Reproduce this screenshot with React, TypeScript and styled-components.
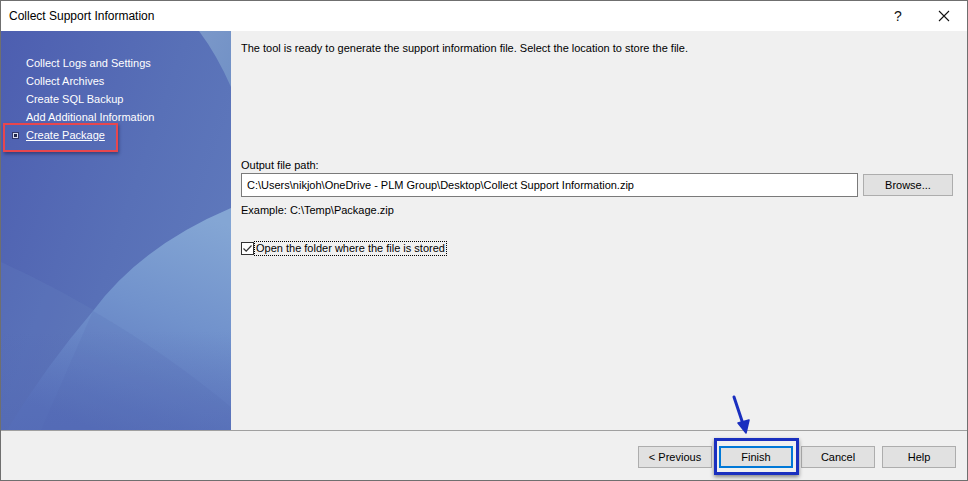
import React from "react";
import styled, { createGlobalStyle } from "styled-components";

const Global = createGlobalStyle`
  html, body { margin: 0; padding: 0; background: #ffffff; }
  body { font-family: "Liberation Sans", Arial, sans-serif; font-size: 12px; color: #000; }
  * { box-sizing: border-box; }
`;

const Window = styled.div`
  position: relative;
  width: 968px;
  height: 481px;
  border: 1px solid #6f6f6f;
  background: #f0f0f0;
  display: flex;
  flex-direction: column;
  overflow: hidden;
`;

const TitleBar = styled.div`
  height: 30px;
  background: #ffffff;
  display: flex;
  align-items: center;
  padding-left: 8px;
  flex-shrink: 0;
`;

const Title = styled.div`
  flex: 1;
  font-size: 12px;
  color: #000;
`;

const TitleButton = styled.div`
  width: 46px;
  height: 30px;
  display: flex;
  align-items: center;
  justify-content: center;
  font-size: 14px;
  color: #111;
`;

const Body = styled.div`
  display: flex;
  height: 399px;
  flex-shrink: 0;
`;

const Sidebar = styled.div`
  position: relative;
  width: 230px;
  flex-shrink: 0;
  background: #5064b3;
  overflow: hidden;
`;

const SidebarArt = styled.svg`
  position: absolute;
  left: 0;
  top: 0;
  width: 230px;
  height: 399px;
`;

const NavList = styled.ul`
  position: relative;
  list-style: none;
  margin: 0;
  padding: 23px 0 0 25px;
`;

const NavItem = styled.li<{ $active?: boolean }>`
  position: relative;
  height: 18px;
  line-height: 18px;
  color: #ffffff;
  font-size: 11px;
  white-space: nowrap;
  text-decoration: ${(p) => (p.$active ? "underline" : "none")};
  &::after {
    content: "";
    display: ${(p) => (p.$active ? "block" : "none")};
    position: absolute;
    left: -23px;
    top: -3px;
    width: 111px;
    height: 25px;
    border: 2px solid #e8464d;
    box-shadow: 1px 2px 3px rgba(20, 20, 60, 0.45);
  }
`;

const Bullet = styled.span`
  position: absolute;
  left: -14px;
  top: 6px;
  width: 7px;
  height: 7px;
  background: #d9def0;
  border: 1px solid #33386a;
  &::after {
    content: "";
    position: absolute;
    left: 1px;
    top: 1px;
    width: 3px;
    height: 3px;
    background: #20244a;
  }
`;

const Main = styled.div`
  flex: 1;
  display: flex;
  flex-direction: column;
  padding: 10px 15px 0 10px;
`;

const Intro = styled.p`
  margin: 0;
  font-size: 11px;
  line-height: 14px;
`;

const Label = styled.div`
  margin-top: 103px;
  font-size: 11px;
  line-height: 14px;
`;

const PathRow = styled.div`
  display: flex;
  align-items: center;
  gap: 5px;
  margin-top: 1px;
`;

const PathInput = styled.div`
  width: 617px;
  height: 24px;
  background: #ffffff;
  border: 1px solid #7a7a7a;
  padding-left: 5px;
  font-size: 11px;
  line-height: 22px;
  white-space: nowrap;
`;

const Button = styled.div<{ $default?: boolean }>`
  width: 74px;
  height: 22px;
  background: #e1e1e1;
  border: 1px solid ${(p) => (p.$default ? "#0078d7" : "#adadad")};
  box-shadow: ${(p) => (p.$default ? "inset 0 0 0 1px #0078d7" : "none")};
  display: flex;
  align-items: center;
  justify-content: center;
  font-size: 11px;
  color: #000;
`;

const BrowseButton = styled(Button)`
  width: 90px;
`;

const Example = styled.div`
  margin-top: 6px;
  font-size: 11px;
  line-height: 14px;
`;

const CheckRow = styled.div`
  display: flex;
  align-items: center;
  margin-top: 25px;
`;

const CheckBox = styled.span`
  width: 13px;
  height: 13px;
  border: 1px solid #333333;
  background: #ffffff;
  display: flex;
  align-items: center;
  justify-content: center;
  margin-right: 1px;
`;

const CheckLabel = styled.span`
  font-size: 11px;
  line-height: 13px;
  outline: 1px dotted #000;
  outline-offset: 0;
  padding: 0 1px;
`;

const Footer = styled.div`
  flex: 1;
  border-top: 1px solid #a0a0a0;
  display: flex;
  justify-content: flex-end;
  align-items: flex-start;
  gap: 7px;
  padding: 15px 11px 0 0;
`;

const FinishWrap = styled.div`
  position: relative;
  margin: 0 1px 0 0;
  &::before {
    content: "";
    position: absolute;
    left: -5px;
    top: -8px;
    right: -6px;
    bottom: -7px;
    border: 3px solid #1a2fbf;
    box-shadow: 0 2px 4px rgba(0, 0, 0, 0.45);
  }
`;

const Arrow = styled.svg`
  position: absolute;
  left: 725px;
  top: 392px;
  width: 30px;
  height: 44px;
`;

export default function App() {
  return (
    <>
      <Global />
      <Window>
        <TitleBar>
          <Title>Collect Support Information</Title>
          <TitleButton>?</TitleButton>
          <TitleButton>
            <svg width="12" height="12" viewBox="0 0 12 12">
              <path d="M1 1 L11 11 M11 1 L1 11" stroke="#111" strokeWidth="1.1" />
            </svg>
          </TitleButton>
        </TitleBar>
        <Body>
          <Sidebar>
            <SidebarArt viewBox="0 0 230 399" preserveAspectRatio="none">
              <defs>
                <linearGradient id="base" x1="0" y1="0" x2="1" y2="0.6">
                  <stop offset="0" stopColor="#4d5eb0" />
                  <stop offset="0.6" stopColor="#5870b7" />
                  <stop offset="1" stopColor="#5f79bc" />
                </linearGradient>
                <linearGradient id="lightA" x1="0.8" y1="0" x2="0.4" y2="1">
                  <stop offset="0" stopColor="#84a6d4" />
                  <stop offset="0.45" stopColor="#7192cc" />
                  <stop offset="1" stopColor="#5a73bc" />
                </linearGradient>
                <linearGradient id="lightTop" x1="0" y1="0" x2="1" y2="1">
                  <stop offset="0" stopColor="#7b98c9" />
                  <stop offset="1" stopColor="#7191c6" />
                </linearGradient>
                <linearGradient id="bottomFade" x1="0" y1="0" x2="0" y2="1">
                  <stop offset="0" stopColor="#4e63b0" stopOpacity="0" />
                  <stop offset="1" stopColor="#4e63b0" stopOpacity="0.4" />
                </linearGradient>
              </defs>
              <rect x="0" y="0" width="230" height="399" fill="url(#base)" />
              <path d="M198 0 Q216 24 230 56 L230 0 Z" fill="url(#lightTop)" />
              <path d="M0 231 Q120 285 230 376 L230 399 L0 399 Z" fill="#7a9ad0" opacity="0.12" />
              <path d="M230 177 Q140 215 92 280 Q45 335 6 399 L230 399 Z" fill="url(#lightA)" />
              <path d="M92 280 Q165 322 230 376 L230 399 L40 399 Z" fill="#4e63b0" opacity="0.15" />
              <rect x="0" y="300" width="230" height="99" fill="url(#bottomFade)" />
            </SidebarArt>
            <NavList>
              <NavItem>Collect Logs and Settings</NavItem>
              <NavItem>Collect Archives</NavItem>
              <NavItem>Create SQL Backup</NavItem>
              <NavItem>Add Additional Information</NavItem>
              <NavItem $active>
                <Bullet />
                Create Package
              </NavItem>
            </NavList>
          </Sidebar>
          <Main>
            <Intro>
              The tool is ready to generate the support information file. Select the location to store the file.
            </Intro>
            <Label>Output file path:</Label>
            <PathRow>
              <PathInput>C:\Users\nikjoh\OneDrive - PLM Group\Desktop\Collect Support Information.zip</PathInput>
              <BrowseButton>Browse...</BrowseButton>
            </PathRow>
            <Example>Example: C:\Temp\Package.zip</Example>
            <CheckRow>
              <CheckBox>
                <svg width="11" height="11" viewBox="0 0 11 11">
                  <path d="M1.5 5.5 L4.2 8.2 L9.5 2.5" fill="none" stroke="#333" strokeWidth="1.2" />
                </svg>
              </CheckBox>
              <CheckLabel>Open the folder where the file is stored</CheckLabel>
            </CheckRow>
          </Main>
        </Body>
        <Footer>
          <Button>&lt; Previous</Button>
          <FinishWrap>
            <Button $default>Finish</Button>
          </FinishWrap>
          <Button>Cancel</Button>
          <Button>Help</Button>
        </Footer>
        <Arrow viewBox="0 0 30 44">
          <path d="M8 4 L18 34" stroke="#1a2fbf" strokeWidth="3" strokeLinecap="round" />
          <path d="M12 30 L20 40 L23 27 Z" fill="#1a2fbf" stroke="#1a2fbf" strokeWidth="1.5" strokeLinejoin="round" />
        </Arrow>
      </Window>
    </>
  );
}
